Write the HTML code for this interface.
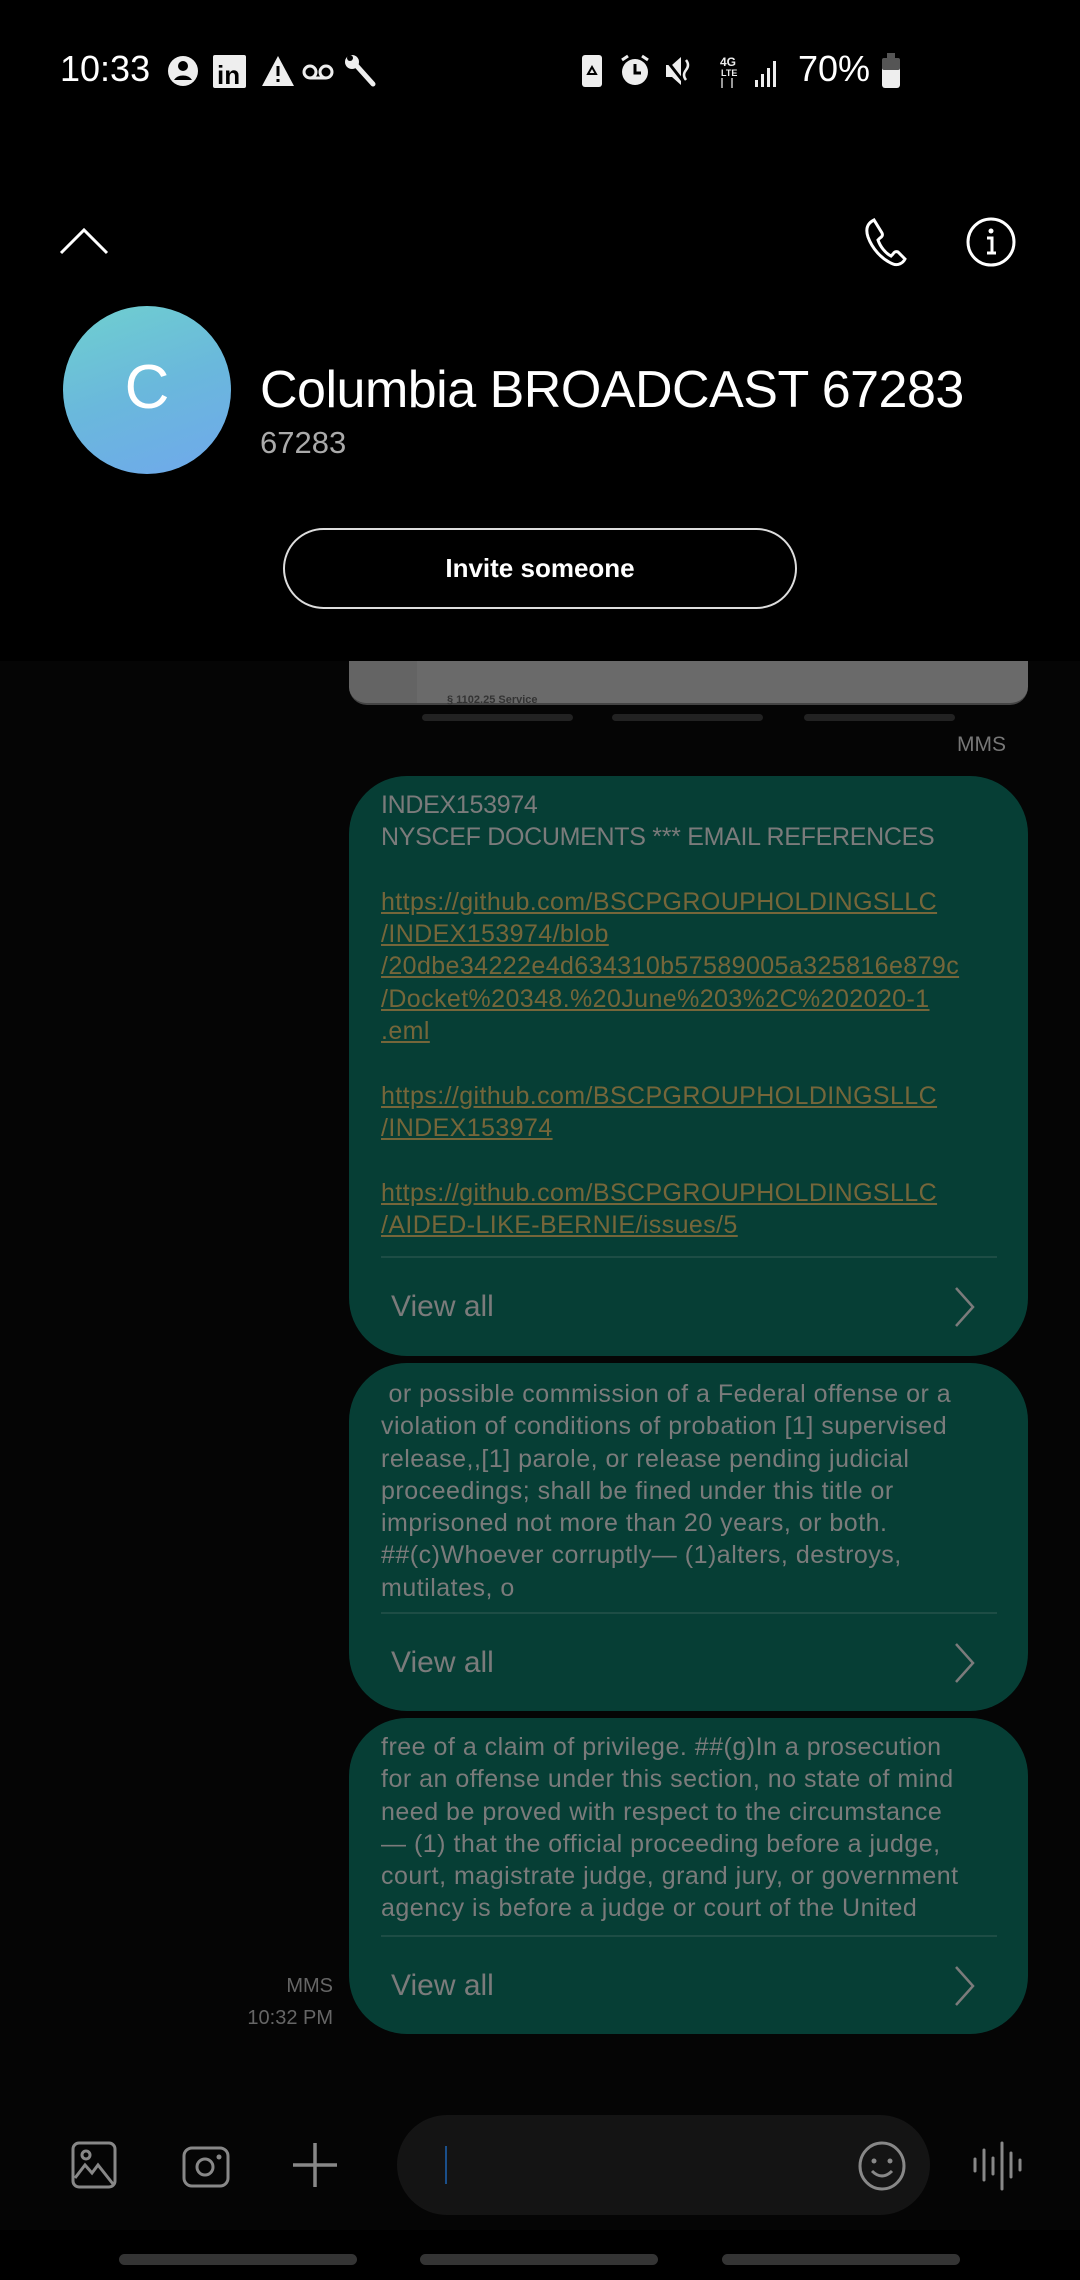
<!DOCTYPE html>
<html><head><meta charset="utf-8"><style>
*{margin:0;padding:0;box-sizing:border-box}
body{width:1080px;height:2280px;background:#050505;position:relative;overflow:hidden;font-family:"Liberation Sans",sans-serif;color:#fff}
.a{position:absolute;white-space:nowrap}
.hdr{position:absolute;left:0;top:0;width:1080px;height:661px;background:#000}
.bub{position:absolute;left:349px;width:679px;background:#063e35;border-radius:58px}
.t{position:absolute;left:32px;font-size:25px;line-height:32.3px;color:#7b7b7b;letter-spacing:0}
.t1{letter-spacing:-0.3px}
.lk{color:#75663a;text-decoration:underline;text-decoration-color:#75663a;letter-spacing:0.4px}
.div{position:absolute;left:32px;right:31px;height:2px;background:#1d4d45}
.va{position:absolute;left:42px;font-size:30px;color:#7b7b7b}
.chev{position:absolute;right:52px}
.bottom{position:absolute;left:0;top:2230px;width:1080px;height:50px;background:#000}
.nb{position:absolute;top:2254px;height:11px;background:#343434;border-radius:6px;width:238px}
</style></head><body>
<div class="hdr"></div>
<div class="a" style="left:60px;top:48px;font-size:36px;color:#fff">10:33</div>
<svg class="a" style="left:166px;top:54px" width="240" height="36" viewBox="0 0 240 36">
<circle cx="17" cy="17" r="15" fill="#eee"/><circle cx="17" cy="12" r="5" fill="#000"/><path d="M8 26a10 8 0 0 1 18 0z" fill="#000"/>
<rect x="47" y="1" width="33" height="33" rx="2" fill="#eee"/><text x="51" y="30" font-size="26" font-weight="bold" fill="#000" font-family="Liberation Sans">in</text>
<path d="M112 2l16 30h-32z" fill="#eee"/><rect x="110.5" y="12" width="3" height="10" fill="#000"/><rect x="110.5" y="25" width="3" height="3" fill="#000"/>
<circle cx="144" cy="18" r="6" fill="none" stroke="#eee" stroke-width="3"/><circle cx="160" cy="18" r="6" fill="none" stroke="#eee" stroke-width="3"/><path d="M144 24h16" stroke="#eee" stroke-width="3"/>
<path d="M185 6l4 4 18 20" stroke="#eee" stroke-width="5" stroke-linecap="round" fill="none"/><circle cx="186" cy="8" r="7" fill="#eee"/><circle cx="184" cy="4" r="3" fill="#000"/>
</svg>
<svg class="a" style="left:580px;top:52px" width="320" height="38" viewBox="0 0 320 38">
<rect x="2" y="3" width="20" height="32" rx="3" fill="#eee"/><path d="M8 22l4-7 4 7z" fill="none" stroke="#000" stroke-width="2"/>
<circle cx="55" cy="20" r="13" fill="#eee"/><path d="M55 12v9h6" stroke="#000" stroke-width="3" fill="none"/><path d="M42 8l6-4M68 8l-6-4" stroke="#eee" stroke-width="3"/>
<path d="M86 13h6l9-8v28l-9-8h-6z" fill="#eee"/><path d="M84 5l22 28" stroke="#000" stroke-width="3"/><path d="M106 8q4 5 0 10q-4 5 0 10" stroke="#eee" stroke-width="2.5" fill="none"/>
<text x="140" y="14" font-size="12" font-weight="bold" fill="#eee" font-family="Liberation Sans">4G</text><text x="141" y="24" font-size="9" font-weight="bold" fill="#eee" font-family="Liberation Sans">LTE</text>
<path d="M142 26v10M152 26v10" stroke="#999" stroke-width="2"/>
<rect x="175" y="28" width="3" height="7" fill="#eee"/><rect x="181" y="22" width="3" height="13" fill="#eee"/><rect x="187" y="16" width="3" height="19" fill="#eee"/><rect x="193" y="9" width="3" height="26" fill="#eee"/>
<rect x="302" y="6" width="18" height="30" rx="3" fill="#eee"/><rect x="302" y="6" width="18" height="12" rx="2" fill="#555"/><rect x="307" y="1" width="8" height="5" fill="#555"/>
</svg>
<div class="a" style="left:798px;top:48px;font-size:36px">70%</div>
<svg class="a" style="left:58px;top:226px" width="52" height="30"><path d="M3 27L26 4l23 23" stroke="#fff" stroke-width="3" fill="none"/></svg>
<svg class="a" style="left:862px;top:216px" width="52" height="52" viewBox="0 0 52 52"><path d="M12 4c-6 3-9 8-6 17 4 11 13 22 25 27 5 2 10-1 12-5l-7-7c-2-1-4 0-5 2l-2 2c-6-3-11-10-13-16l2-2c2-1 3-3 2-5z" fill="none" stroke="#fff" stroke-width="3"/></svg>
<svg class="a" style="left:965px;top:216px" width="52" height="52"><circle cx="26" cy="26" r="23" stroke="#fff" stroke-width="3" fill="none"/><circle cx="26" cy="15" r="2.5" fill="#fff"/><path d="M22 22h5v15M22 37h9" stroke="#fff" stroke-width="3" fill="none"/></svg>
<div class="a" style="left:63px;top:306px;width:168px;height:168px;border-radius:50%;background:linear-gradient(160deg,#6fd0cf 0%,#6ab8dc 50%,#6fa8ec 100%)"></div>
<div class="a" style="left:63px;top:352px;width:168px;text-align:center;font-size:62px;color:#fff">C</div>
<div class="a" style="left:260px;top:360px;font-size:52px;color:#fff;letter-spacing:-0.5px">Columbia BROADCAST 67283</div>
<div class="a" style="left:260px;top:425px;font-size:31px;color:#aaa">67283</div>
<div class="a" style="left:283px;top:528px;width:514px;height:81px;border:2.5px solid #ddd;border-radius:41px;text-align:center;line-height:76px;font-size:26px;font-weight:600">Invite someone</div>
<div class="a" style="left:349px;top:661px;width:679px;height:44px;background:#6a6a6a;border-radius:0 0 18px 18px;border-bottom:2px solid #444"></div>
<div class="a" style="left:349px;top:661px;width:68px;height:42px;background:#646464;border-radius:0 0 0 18px"></div>
<div class="a" style="left:447px;top:694px;font-size:11px;color:#333;font-weight:bold">§ 1102.25 Service</div>
<div class="a" style="left:422px;top:714px;width:151px;height:7px;background:#222;border-radius:4px"></div>
<div class="a" style="left:612px;top:714px;width:151px;height:7px;background:#222;border-radius:4px"></div>
<div class="a" style="left:804px;top:714px;width:151px;height:7px;background:#222;border-radius:4px"></div>
<div class="a" style="left:957px;top:733px;font-size:21px;color:#777">MMS</div>
<div class="bub" style="top:776px;height:580px">
<div class="t" style="top:13px"><span class="t1">INDEX153974<br>NYSCEF DOCUMENTS *** EMAIL REFERENCES</span><br><br>
<span class="lk">https://github.com/BSCPGROUPHOLDINGSLLC</span><br><span class="lk">/INDEX153974/blob</span><br><span class="lk">/20dbe34222e4d634310b57589005a325816e879c</span><br><span class="lk">/Docket%20348.%20June%203%2C%202020-1</span><br><span class="lk">.eml</span><br><br>
<span class="lk">https://github.com/BSCPGROUPHOLDINGSLLC</span><br><span class="lk">/INDEX153974</span><br><br>
<span class="lk">https://github.com/BSCPGROUPHOLDINGSLLC</span><br><span class="lk">/AIDED-LIKE-BERNIE/issues/5</span></div>
<div class="div" style="top:480px"></div>
<div class="va" style="top:514px">View all</div>
<svg class="chev" style="top:510px" width="22" height="42"><path d="M2 2l17 19-17 19" stroke="#7b7b7b" stroke-width="2.5" fill="none"/></svg>
</div>
<div class="bub" style="top:1363px;height:348px">
<div class="t" style="top:15px;letter-spacing:0.5px">&nbsp;or possible commission of a Federal offense or a<br>violation of conditions of probation [1] supervised<br>release,,[1] parole, or release pending judicial<br>proceedings; shall be fined under this title or<br>imprisoned not more than 20 years, or both.<br>##(c)Whoever corruptly— (1)alters, destroys,<br>mutilates, o</div>
<div class="div" style="top:249px"></div>
<div class="va" style="top:283px">View all</div>
<svg class="chev" style="top:279px" width="22" height="42"><path d="M2 2l17 19-17 19" stroke="#7b7b7b" stroke-width="2.5" fill="none"/></svg>
</div>
<div class="bub" style="top:1718px;height:316px">
<div class="t" style="top:13px;letter-spacing:0.5px">free of a claim of privilege. ##(g)In a prosecution<br>for an offense under this section, no state of mind<br>need be proved with respect to the circumstance<br>— (1) that the official proceeding before a judge,<br>court, magistrate judge, grand jury, or government<br>agency is before a judge or court of the United</div>
<div class="div" style="top:217px"></div>
<div class="va" style="top:251px">View all</div>
<svg class="chev" style="top:247px" width="22" height="42"><path d="M2 2l17 19-17 19" stroke="#7b7b7b" stroke-width="2.5" fill="none"/></svg>
</div>
<div class="a" style="left:280px;top:1975px;font-size:20px;color:#666;width:53px;text-align:right">MMS</div>
<div class="a" style="left:220px;top:2007px;font-size:20px;color:#666;width:113px;text-align:right">10:32 PM</div>
<svg class="a" style="left:70px;top:2140px" width="48" height="50"><rect x="3" y="3" width="42" height="44" rx="6" stroke="#888" stroke-width="3" fill="none"/><circle cx="16" cy="15" r="4" stroke="#888" stroke-width="3" fill="none"/><path d="M5 38l10-13 7 8 6-8 15 19" stroke="#888" stroke-width="3" fill="none"/></svg>
<svg class="a" style="left:181px;top:2145px" width="50" height="44"><rect x="3" y="3" width="44" height="38" rx="8" stroke="#888" stroke-width="3" fill="none"/><circle cx="24" cy="22" r="8" stroke="#888" stroke-width="3" fill="none"/><circle cx="38" cy="12" r="2.5" fill="#888"/></svg>
<svg class="a" style="left:291px;top:2141px" width="48" height="48"><path d="M24 2v44M2 24h44" stroke="#888" stroke-width="3.5"/></svg>
<div class="a" style="left:397px;top:2115px;width:533px;height:100px;background:#141414;border-radius:50px"></div>
<div class="a" style="left:445px;top:2146px;width:2px;height:38px;background:#1a4f8a"></div>
<svg class="a" style="left:857px;top:2140px" width="50" height="52"><ellipse cx="25" cy="26" rx="22" ry="23" stroke="#888" stroke-width="3" fill="none"/><circle cx="17" cy="21" r="2.5" fill="#888"/><circle cx="33" cy="21" r="2.5" fill="#888"/><path d="M15 31q10 10 20 0" stroke="#888" stroke-width="3" fill="none"/></svg>
<svg class="a" style="left:972px;top:2141px" width="54" height="50" viewBox="0 0 54 50"><path d="M3 18v12M12 9v30M21 17v16M30 2v46M39 12v24M48 19v10" stroke="#888" stroke-width="3" stroke-linecap="round"/></svg>
<div class="bottom"></div>
<div class="nb" style="left:119px"></div>
<div class="nb" style="left:420px"></div>
<div class="nb" style="left:722px"></div>
</body></html>
